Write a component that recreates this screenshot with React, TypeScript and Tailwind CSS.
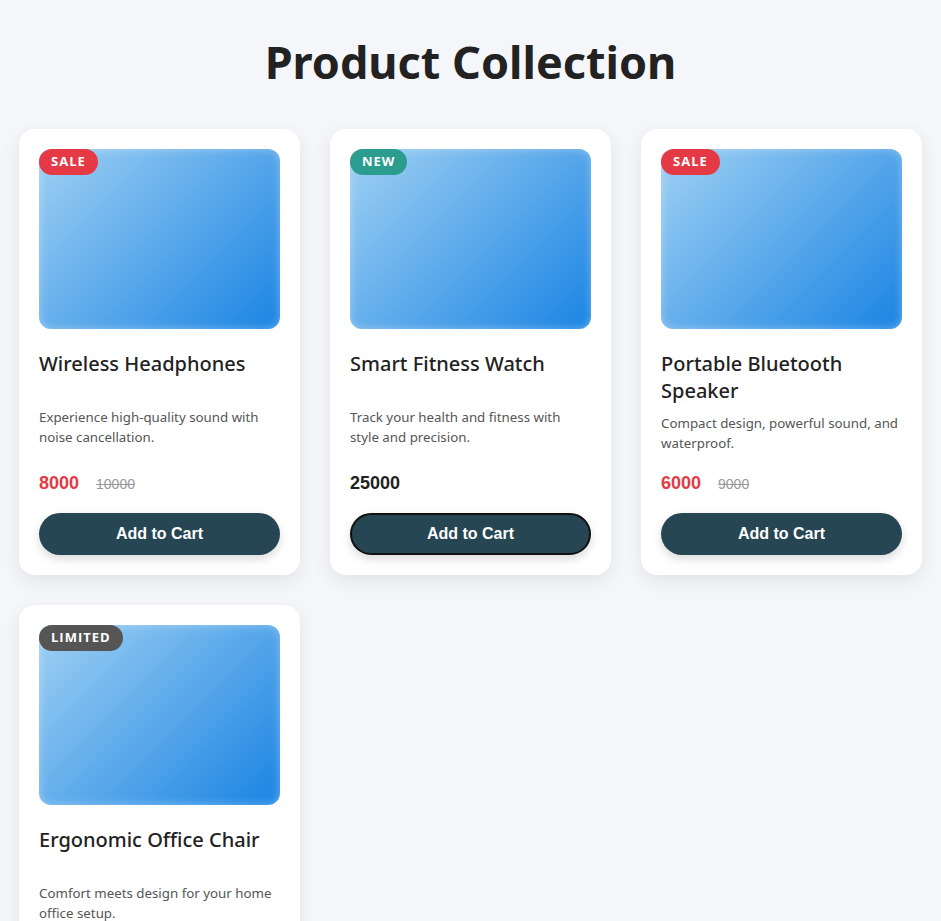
import React from 'react';

type Product = {
  name: string;
  desc: string;
  price: number;
  oldPrice?: number;
  badge: string;
  badgeClass: string;
  focused?: boolean;
};

const products: Product[] = [
  {
    name: 'Wireless Headphones',
    desc: 'Experience high-quality sound with noise cancellation.',
    price: 8000,
    oldPrice: 10000,
    badge: 'SALE',
    badgeClass: 'bg-[#e63946]',
  },
  {
    name: 'Smart Fitness Watch',
    desc: 'Track your health and fitness with style and precision.',
    price: 25000,
    badge: 'NEW',
    badgeClass: 'bg-[#2a9d8f]',
    focused: true,
  },
  {
    name: 'Portable Bluetooth Speaker',
    desc: 'Compact design, powerful sound, and waterproof.',
    price: 6000,
    oldPrice: 9000,
    badge: 'SALE',
    badgeClass: 'bg-[#e63946]',
  },
  {
    name: 'Ergonomic Office Chair',
    desc: 'Comfort meets design for your home office setup.',
    price: 18000,
    badge: 'LIMITED',
    badgeClass: 'bg-[#555555]',
  },
];

function ProductCard({ p }: { p: Product }) {
  return (
    <div className="flex flex-col bg-white rounded-2xl p-5 shadow-[0_6px_18px_rgba(0,0,0,0.08)]">
      <div className="relative h-[180px] rounded-xl bg-[linear-gradient(135deg,#9fd0f3,#1a84e3)] shadow-[inset_0_0_10px_rgba(255,255,255,0.35)]">
        <span
          className={`absolute left-0 top-0 h-[26px] px-3 rounded-full flex items-center text-white text-[13px] font-bold tracking-[1px] font-['Open_Sans',sans-serif] ${p.badgeClass}`}
        >
          {p.badge}
        </span>
      </div>
      <h3 className="mt-[21px] min-h-[48px] text-[20px] leading-[27px] font-medium text-[#222]">{p.name}</h3>
      <p className="mt-[10px] text-[13.3px] leading-[19.5px] text-[#555]">{p.desc}</p>
      <div className="mt-auto pt-[17px] flex items-baseline gap-[17px] font-['Liberation_Sans',sans-serif]">
        {p.oldPrice ? (
          <>
            <span className="text-[18px] font-bold text-[#e63946]">{p.price}</span>
            <span className="text-[14px] text-[#999] line-through">{p.oldPrice}</span>
          </>
        ) : (
          <span className="text-[18px] font-bold text-[#222]">{p.price}</span>
        )}
      </div>
      <button
        className={`mt-[16px] h-[42px] w-full rounded-full bg-[#264653] text-white text-[16px] font-bold font-['Liberation_Sans',sans-serif] shadow-[0_4px_10px_rgba(0,0,0,0.15)] border-2 ${p.focused ? 'border-[#111]' : 'border-transparent'}`}
      >
        Add to Cart
      </button>
    </div>
  );
}

export default function App() {
  return (
    <div className="min-h-screen bg-[#f5f6fa] px-[19px] pt-[33px] pb-10 font-['Noto_Sans',sans-serif]">
      <h1 className="text-center text-[45px] leading-[58px] font-bold text-[#222] mb-[38px]">Product Collection</h1>
      <div className="grid grid-cols-3 gap-[30px]">
        {products.map((p) => (
          <ProductCard key={p.name} p={p} />
        ))}
      </div>
    </div>
  );
}
